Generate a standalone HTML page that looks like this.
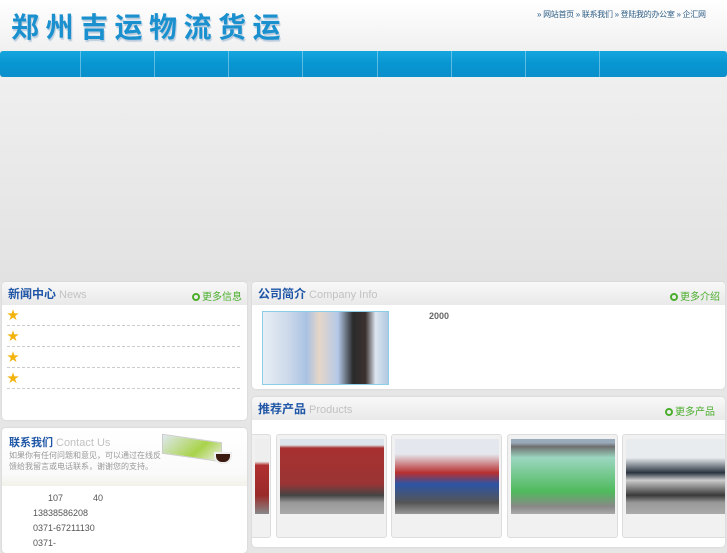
<!DOCTYPE html>
<html><head><meta charset="utf-8"><style>
*{margin:0;padding:0;box-sizing:border-box}
body{width:727px;height:545px;overflow:hidden;background:#e6e6e6;font-family:"Liberation Sans","Noto Sans CJK SC",sans-serif;position:relative}
.abs{position:absolute}
#hdr{left:0;top:0;width:727px;height:51px;background:linear-gradient(#fff,#f0f0f0)}
#title{left:11px;top:6px;font-size:28px;font-weight:bold;color:#1a90cf;letter-spacing:6.5px;text-shadow:1px 2px 1px #bcd;white-space:nowrap;font-family:"Noto Sans CJK SC",sans-serif}
#toplinks{left:537px;top:9px;font-size:8px;color:#2d5d85;white-space:nowrap;letter-spacing:-0.3px}
#nav{left:0;top:51px;width:727px;height:26px;background:linear-gradient(#16a6de,#0896d2 50%,#0a8fcb);border-radius:3px}
.sep{top:51px;width:1px;height:26px;background:rgba(255,255,255,.35)}
#banner{left:0;top:77px;width:727px;height:205px;background:linear-gradient(#efefef,#e2e2e2)}
.panel{background:#fff;border-radius:4px;box-shadow:0 0 2px #ccc;overflow:hidden}
.ph{position:absolute;left:0;top:0;right:0;height:23px;background:linear-gradient(#f8f8f8,#e9e9e9);border-radius:4px 4px 0 0}
.ph b{position:absolute;left:6px;top:3px;font-size:12px;color:#1f56a6;white-space:nowrap}
.ph b span{font-weight:normal;color:#c2c2c2;font-size:11px;margin-left:3px}
.more{position:absolute;top:6px;font-size:10px;color:#4aae2c;white-space:nowrap}
.more i{display:inline-block;width:8px;height:8px;border:2px solid #4aae2c;border-radius:50%;margin-right:2px;vertical-align:-1px}
.row{position:absolute;left:5px;width:233px;height:21px;border-bottom:1px dashed #ccc}
.row s{position:absolute;left:0;top:1px;color:#f2b30c;font-size:12px;text-decoration:none}
.card{position:absolute;top:37px;width:111px;height:104px;border:1px solid #ddd;border-radius:3px;background:#f1f1f1;overflow:hidden}
.card div{position:absolute;left:3px;top:4px;width:104px;height:75px}
.txt{font-size:9px;color:#555;white-space:nowrap}
</style></head><body>
<div id="hdr" class="abs"></div>
<div id="title" class="abs">郑州吉运物流货运</div>
<div id="toplinks" class="abs">» 网站首页 » 联系我们 » 登陆我的办公室 » 企汇网</div>
<div id="nav" class="abs"></div>
<div class="abs sep" style="left:80px"></div><div class="abs sep" style="left:154px"></div><div class="abs sep" style="left:228px"></div><div class="abs sep" style="left:302px"></div><div class="abs sep" style="left:377px"></div><div class="abs sep" style="left:451px"></div><div class="abs sep" style="left:525px"></div><div class="abs sep" style="left:599px"></div>
<div id="banner" class="abs"></div>

<div class="abs panel" style="left:2px;top:282px;width:245px;height:138px">
 <div class="ph"><b>新闻中心<span>News</span></b><div class="more" style="left:190px"><i></i>更多信息</div></div>
 <div class="row" style="top:23px"><s>★</s></div>
 <div class="row" style="top:44px"><s>★</s></div>
 <div class="row" style="top:65px"><s>★</s></div>
 <div class="row" style="top:86px"><s>★</s></div>
</div>

<div class="abs panel" style="left:2px;top:428px;width:245px;height:125px">
 <div style="position:absolute;left:0;top:0;width:245px;height:58px;background:linear-gradient(#fff,#fafafa 80%,#f2f2ea)"></div>
 <b style="position:absolute;left:7px;top:6px;font-size:11px;color:#1f56a6;white-space:nowrap">联系我们<span style="font-weight:normal;color:#c2c2c2;margin-left:3px">Contact Us</span></b>
 <div style="position:absolute;left:7px;top:22px;font-size:8px;color:#999;line-height:11px;white-space:nowrap">如果你有任何问题和意见，可以通过在线反<br>馈给我留言或电话联系，谢谢您的支持。</div>
 <div style="position:absolute;left:160px;top:10px;width:60px;height:20px;background:linear-gradient(135deg,#dfe8f0,#a9d34a 60%,#eee);transform:skewY(8deg);border:1px solid #ccc"></div>
 <div style="position:absolute;left:212px;top:24px;width:18px;height:12px;background:#3b1a10;border-radius:0 0 8px 8px;border:2px solid #eee"></div>
 <div class="txt" style="position:absolute;left:46px;top:65px">107&nbsp;&nbsp;&nbsp;&nbsp;&nbsp;&nbsp;&nbsp;&nbsp;&nbsp;&nbsp;&nbsp;&nbsp;40</div>
 <div class="txt" style="position:absolute;left:31px;top:80px">13838586208</div>
 <div class="txt" style="position:absolute;left:31px;top:95px">0371-67211130</div>
 <div class="txt" style="position:absolute;left:31px;top:110px">0371-</div>
</div>

<div class="abs panel" style="left:252px;top:282px;width:473px;height:107px">
 <div class="ph"><b>公司简介<span>Company Info</span></b><div class="more" style="left:418px"><i></i>更多介绍</div></div>
 <div style="position:absolute;left:10px;top:29px;width:127px;height:74px;border:1px solid #8ccde8;background:linear-gradient(90deg,#e8eef4 0,#cdd9ea 20%,#a9c2e2 35%,#e6d6c8 45%,#b4c9e8 60%,#2a2a2a 72%,#3b3230 82%,#dde6f0 90%,#b0c8e0)"></div>
 <div class="txt" style="position:absolute;left:177px;top:29px;font-weight:bold;color:#666">2000</div>
</div>

<div class="abs panel" style="left:252px;top:397px;width:473px;height:150px">
 <div class="ph"><b>推荐产品<span>Products</span></b><div class="more" style="left:413px"><i></i>更多产品</div></div>
 <div class="card" style="left:-20px;width:39px"><div style="left:22px;width:14px;background:linear-gradient(#eee 30%,#b03030 35%,#9a2a2a 75%,#888)"></div></div>
 <div class="card" style="left:24px"><div style="background:linear-gradient(#dde3ea 8%,#a83030 12%,#9a3434 60%,#444 75%,#999 85%,#aaa)"></div></div>
 <div class="card" style="left:139px"><div style="background:linear-gradient(#e4e8ee 20%,#b83030 45%,#2d55a4 60%,#555 85%,#999)"></div></div>
 <div class="card" style="left:255px"><div style="background:linear-gradient(#9ab 5%,#6f6f6f 10%,#9bd6c0 25%,#4fba5c 70%,#888 90%,#aaa)"></div></div>
 <div class="card" style="left:370px;width:110px"><div style="background:linear-gradient(#e8ecef 25%,#2a3440 45%,#ccc 55%,#3a3a3a 75%,#999 85%,#aaa)"></div></div>
</div>
</body></html>
